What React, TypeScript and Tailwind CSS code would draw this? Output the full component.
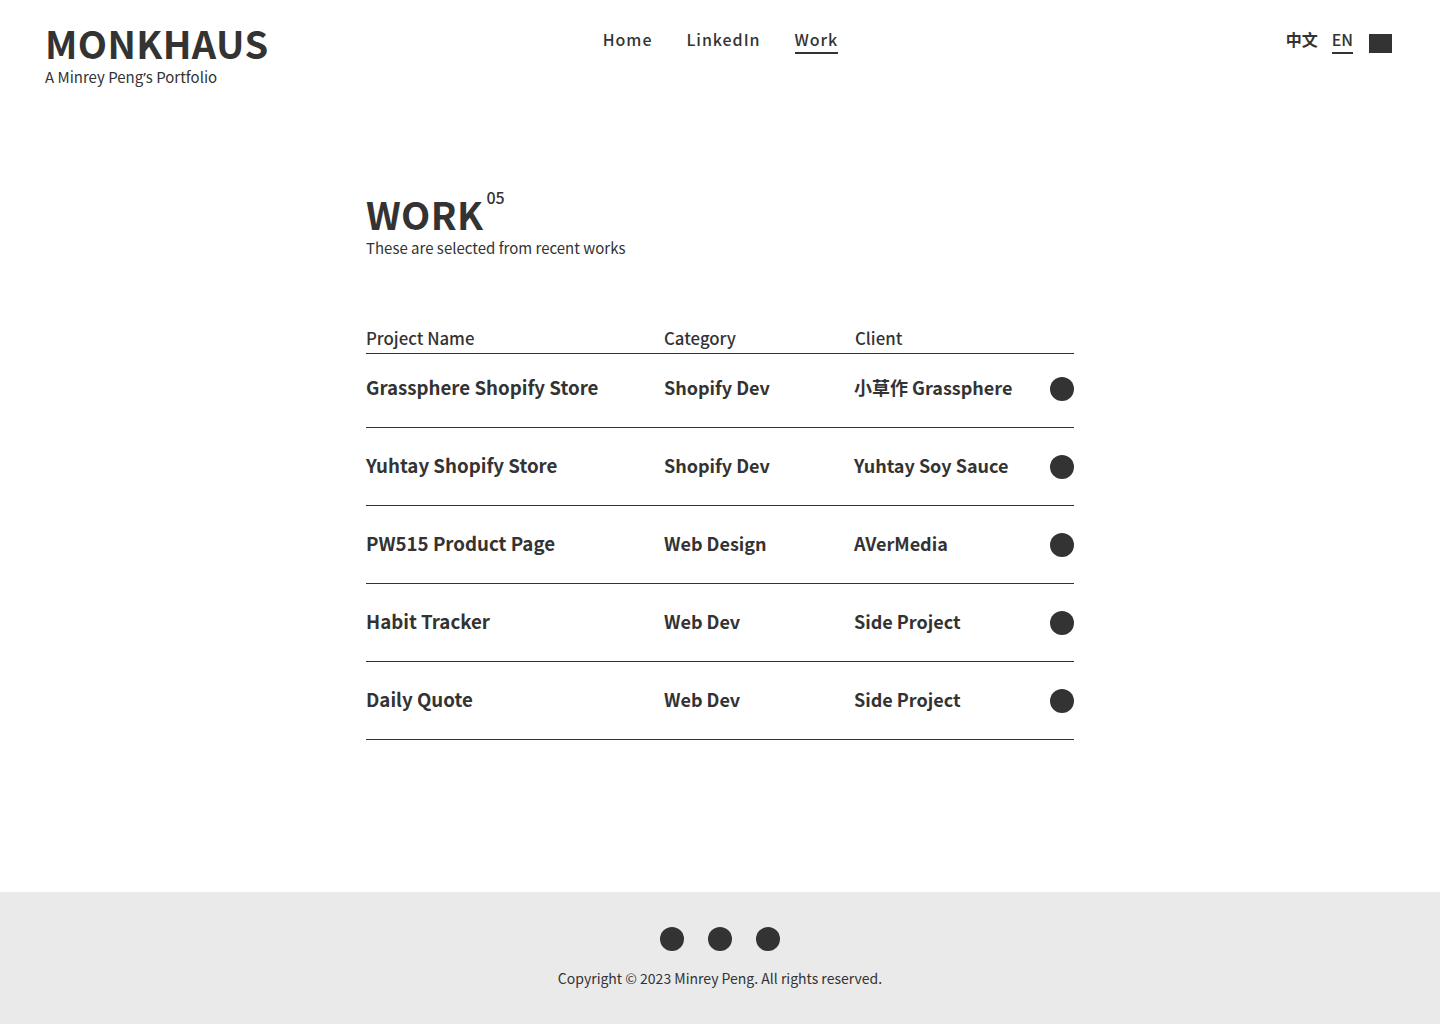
import React from 'react';

const works = [
  { name: 'Grassphere Shopify Store', category: 'Shopify Dev', client: '小草作 Grassphere' },
  { name: 'Yuhtay Shopify Store', category: 'Shopify Dev', client: 'Yuhtay Soy Sauce' },
  { name: 'PW515 Product Page', category: 'Web Design', client: 'AVerMedia' },
  { name: 'Habit Tracker', category: 'Web Dev', client: 'Side Project' },
  { name: 'Daily Quote', category: 'Web Dev', client: 'Side Project' },
];

export default function App() {
  return (
    <div
      className="min-h-[1024px] flex flex-col bg-white text-[#333]"
      style={{ fontFamily: '"Noto Sans CJK TC", "Noto Sans", sans-serif' }}
    >
      {/* Header */}
      <header className="grid grid-cols-[1fr_auto_1fr] items-start pl-[45px] pr-[48px] pt-[21px]">
        <div className="flex flex-col">
          <span className="text-[38px] leading-[44px] font-bold tracking-[0.01em]">MONKHAUS</span>
          <span className="mt-[3px] text-[15px] leading-[18px]">
            A Minrey Peng<span style={{ fontFamily: '"Noto Sans", sans-serif' }}>’</span>s Portfolio
          </span>
        </div>
        <nav className="ml-[4px] flex gap-[34px] pt-[8px] text-[16px] leading-[20px] font-medium tracking-[0.06em]">
          <a className="pb-[3px] border-b-2 border-transparent">Home</a>
          <a className="pb-[3px] border-b-2 border-transparent">LinkedIn</a>
          <a className="pb-[3px] border-b-2 border-[#333]">Work</a>
        </nav>
        <div className="flex justify-end items-start gap-[14px] pt-[8px] text-[16px] leading-[20px] font-bold">
          <span className="pb-[3px] border-b-2 border-transparent">中文</span>
          <span className="pb-[3px] border-b-2 border-[#333] font-medium">EN</span>
          <span className="ml-[2px] mt-[5px] w-[23px] h-[19px] bg-[#333]"></span>
        </div>
      </header>

      {/* Main */}
      <main className="w-[708px] mx-auto mt-[106px]">
        <div className="flex items-start">
          <h1 className="text-[38px] leading-[44px] font-bold tracking-[0.01em]">WORK</h1>
          <span className="ml-[3px] -mt-[3px] text-[16px] leading-[16px] font-medium">05</span>
        </div>
        <p className="mt-[2px] text-[15px] leading-[20px]">These are selected from recent works</p>

        <div className="mt-[68px]">
          <div className="grid grid-cols-[298px_191px_1fr] text-[16.8px] font-medium leading-[24px] pb-[3px] border-b border-[#333]">
            <span>Project Name</span>
            <span>Category</span>
            <span>Client</span>
          </div>
          {works.map((w, i) => (
            <div
              key={w.name}
              className={
                'grid grid-cols-[298px_190px_1fr_24px] items-center h-[78px] border-b border-[#333] font-bold pb-[2px]' +
                (i === 0 ? ' -mt-[4px]' : '')
              }
            >
              <span className="text-[18.7px]">{w.name}</span>
              <span className="text-[18px]">{w.category}</span>
              <span className="text-[18px]">{w.client}</span>
              <span className="w-6 h-6 rounded-full bg-[#333] translate-y-[1px]"></span>
            </div>
          ))}
        </div>
      </main>

      {/* Footer */}
      <footer className="mt-auto h-[132px] bg-[#eaeaea] flex flex-col items-center pt-[35px]">
        <div className="flex gap-6">
          <span className="w-6 h-6 rounded-full bg-[#333]"></span>
          <span className="w-6 h-6 rounded-full bg-[#333]"></span>
          <span className="w-6 h-6 rounded-full bg-[#333]"></span>
        </div>
        <p className="mt-[17px] text-[14px] leading-[20px]">
          Copyright © 2023 Minrey Peng. All rights reserved.
        </p>
      </footer>
    </div>
  );
}
